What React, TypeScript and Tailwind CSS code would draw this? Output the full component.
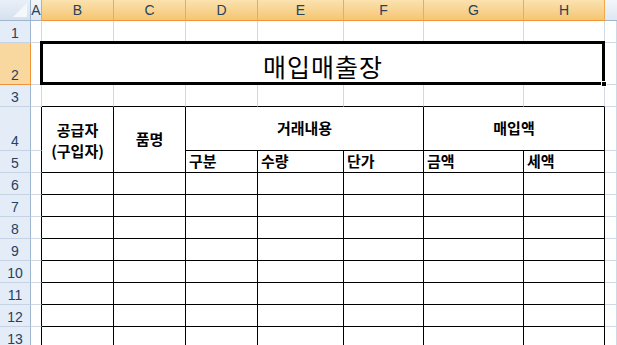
import React from 'react';

const cols = ['A', 'B', 'C', 'D', 'E', 'F', 'G', 'H'];
const bodyRows = [6, 7, 8, 9, 10, 11, 12, 13];
const kr = "font-['Noto_Sans_CJK_KR',sans-serif]";
const grid = 'border-r border-b border-[#d0d7e5]';

const RowHead: React.FC<{ n: number; selected?: boolean }> = ({ n, selected }) => (
  <div
    className={
      selected
        ? 'flex items-end justify-center pb-[1px] border-r border-b border-[#f29436] bg-[#f9d89f] text-[#27415f] text-[14px] leading-[16px]'
        : 'flex items-end justify-center pb-[1px] border-r border-[#9eb6ce] border-b border-b-[#c5d3e5] bg-[#e4ecf7] text-[#27415f] text-[14px] leading-[16px]'
    }
  >
    {n}
  </div>
);

const App: React.FC = () => {
  return (
    <div className="w-[617px] h-[345px] overflow-hidden bg-white font-['Liberation_Sans',sans-serif]">
      <div className="grid grid-cols-[31px_11px_72px_72px_72px_86px_80px_100px_81px_1fr] grid-rows-[21px_22px_42px_22px_44px_22px_22px_22px_22px_22px_22px_22px_22px_22px]">
        {/* column headers */}
        <div className="relative border-r border-b border-[#9eb6ce] bg-gradient-to-b from-[#e9eff8] to-[#d6e1ee]">
          <div className="absolute right-[3px] bottom-[3px] w-0 h-0 border-l-[14px] border-l-transparent border-b-[14px] border-b-[#f4f7fb]" />
        </div>
        {cols.map((c) =>
          c === 'A' ? (
            <div
              key={c}
              className="flex items-center justify-center border-r border-b border-[#9eb6ce] bg-gradient-to-b from-[#f3f6fb] to-[#dfe7f1] text-[#27415f] text-[14px]"
            >
              {c}
            </div>
          ) : (
            <div
              key={c}
              className="flex items-center justify-center border-r border-[#f4a94f] border-b border-b-[#f29436] bg-gradient-to-b from-[#fbe2b0] to-[#f4c670] text-[#27415f] text-[14px]"
            >
              {c}
            </div>
          )
        )}
        <div className="border-b border-[#9eb6ce] bg-gradient-to-b from-[#f3f6fb] to-[#dfe7f1]" />

        {/* row 1 */}
        <RowHead n={1} />
        {cols.map((c) => (
          <div key={c} className={grid} />
        ))}
        <div className={grid} />

        {/* row 2: title */}
        <RowHead n={2} selected />
        <div className={grid} />
        <div className={`relative col-span-7 flex items-center justify-center pt-[4px] ${grid}`}>
          <span className={`${kr} text-[25px] leading-[28px] text-black tracking-[1px]`}>매입매출장</span>
          <div className="absolute -left-[2px] -top-[2px] -right-[1px] -bottom-[1px] border-[3px] border-black" />
          <div className="absolute -right-[3px] -bottom-[3px] w-[6px] h-[6px] bg-black border border-white" />
        </div>
        <div className={grid} />

        {/* row 3 */}
        <RowHead n={3} />
        <div className={grid} />
        {cols.slice(1).map((c) => (
          <div key={c} className="border-r border-[#d0d7e5] border-b border-b-black" />
        ))}
        <div className={grid} />

        {/* row 4 */}
        <RowHead n={4} />
        <div className="border-r border-r-black border-b border-b-[#d0d7e5]" />
        <div
          className={`row-span-2 flex flex-col items-center justify-center border-r border-b border-black ${kr} font-bold text-[15px] leading-[21px] text-black`}
        >
          <span>공급자</span>
          <span>(구입자)</span>
        </div>
        <div
          className={`row-span-2 flex items-center justify-center border-r border-b border-black ${kr} font-bold text-[15px] text-black`}
        >
          품명
        </div>
        <div
          className={`col-span-3 flex items-center justify-center border-r border-b border-black ${kr} font-bold text-[15px] text-black`}
        >
          거래내용
        </div>
        <div
          className={`col-span-2 flex items-center justify-center border-r border-b border-black ${kr} font-bold text-[15px] text-black`}
        >
          매입액
        </div>
        <div className={grid} />

        {/* row 5 */}
        <RowHead n={5} />
        <div className="border-r border-r-black border-b border-b-[#d0d7e5]" />
        {['구분', '수량', '단가', '금액', '세액'].map((t) => (
          <div
            key={t}
            className={`flex items-center pl-[3px] border-r border-b border-black ${kr} font-bold text-[15px] text-black`}
          >
            {t}
          </div>
        ))}
        <div className={grid} />

        {/* body rows */}
        {bodyRows.map((n) => (
          <React.Fragment key={n}>
            <RowHead n={n} />
            <div className="border-r border-r-black border-b border-b-[#d0d7e5]" />
            {cols.slice(1).map((c) => (
              <div key={c} className="border-r border-b border-black" />
            ))}
            <div className={grid} />
          </React.Fragment>
        ))}
      </div>
    </div>
  );
};

export default App;
